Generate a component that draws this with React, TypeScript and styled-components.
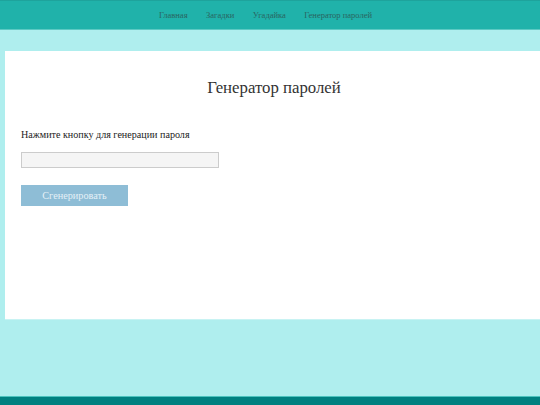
import React from "react";
import styled, { createGlobalStyle } from "styled-components";

const serif = `"Liberation Serif", "Times New Roman", serif`;

const Global = createGlobalStyle`
  html, body { margin: 0; padding: 0; }
  body {
    background: #afeeee;
    font-family: ${serif};
    overflow: hidden;
    width: 540px;
    height: 405px;
  }
`;

const Page = styled.div`
  display: flex;
  flex-direction: column;
  height: 405px;
  width: 540px;
  overflow: hidden;
`;

const Header = styled.header`
  height: 28px;
  background: #20b2aa;
  border-top: 1px solid #1ea39c;
  border-bottom: 1px solid #5cc9c3;
  display: flex;
  justify-content: center;
  align-items: center;
  gap: 18.5px;
  padding-right: 9px;
`;

const NavLink = styled.a`
  font-size: 8.5px;
  line-height: 12px;
  color: #2a6561;
  text-decoration: none;
`;

const Main = styled.main`
  flex: 1;
  padding: 21px 0 0 5px;
`;

const Card = styled.section`
  background: #fff;
  width: 545px;
  height: 269px;
  border-bottom: 1px solid #c8f3f3;
  box-sizing: border-box;
  padding: 26px 23px 0 16px;
`;

const Title = styled.h1`
  margin: 0;
  text-align: center;
  font-weight: normal;
  font-size: 16.8px;
  color: #333;
  line-height: 22px;
`;

const Hint = styled.p`
  margin: 30px 0 0 0;
  font-size: 10.1px;
  color: #222;
  line-height: 12px;
`;

const Field = styled.input`
  display: block;
  margin-top: 11px;
  width: 198px;
  height: 16px;
  box-sizing: border-box;
  border: 1px solid #ccc;
  background: #f5f5f5;
  padding: 0;
`;

const Button = styled.button`
  display: block;
  margin-top: 17px;
  width: 107px;
  height: 21px;
  border: none;
  background: #8ebdd6;
  color: #e4f0f6;
  font-family: ${serif};
  font-size: 10.24px;
  padding: 0;
  cursor: pointer;
`;

const Footer = styled.footer`
  height: 8px;
  background: #008080;
  border-top: 1px solid #4cc3bf;
`;

export default function App() {
  return (
    <>
      <Global />
      <Page>
        <Header>
          <NavLink href="#">Главная</NavLink>
          <NavLink href="#">Загадки</NavLink>
          <NavLink href="#">Угадайка</NavLink>
          <NavLink href="#">Генератор паролей</NavLink>
        </Header>
        <Main>
          <Card>
            <Title>Генератор паролей</Title>
            <Hint>Нажмите кнопку для генерации пароля</Hint>
            <Field type="text" readOnly />
            <Button>Сгенерировать</Button>
          </Card>
        </Main>
        <Footer />
      </Page>
    </>
  );
}
